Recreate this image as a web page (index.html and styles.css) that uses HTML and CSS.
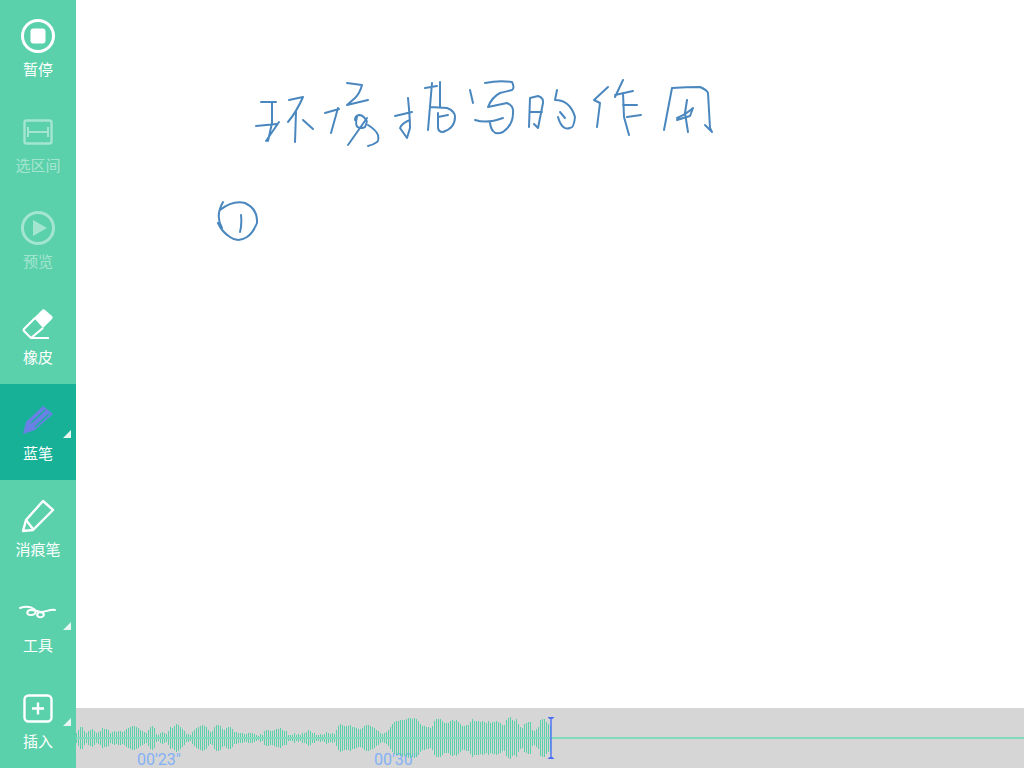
FILE: index.html
```html
<!DOCTYPE html>
<html lang="zh-CN">

<head>
  <meta charset="UTF-8">
  <title>录制</title>
  <link rel="stylesheet" href="styles.css">
</head>

<body>
  <div class="sidebar">
    <div class="tool">
      <svg class="icon" viewBox="0 0 40 40"><circle cx="20" cy="20" r="15.5" fill="none" stroke="#fff" stroke-width="3"/><rect x="12.5" y="12.5" width="15" height="15" rx="3" fill="#fff"/></svg>
      <span>暂停</span>
    </div>
    <div class="tool off">
      <svg class="icon" viewBox="0 0 40 40"><rect x="6.500" y="8.500" width="27" height="23" rx="2" fill="none" stroke="#fff" stroke-width="2.400"/><path d="M10 15v10M30 15v10M10 20h20" fill="none" stroke="#fff" stroke-width="2"/></svg>
      <span>选区间</span>
    </div>
    <div class="tool off">
      <svg class="icon" viewBox="0 0 40 40"><circle cx="20" cy="20" r="15.500" fill="none" stroke="#fff" stroke-width="3"/><path d="M15 12l14 8-14 8z" fill="#fff"/></svg>
      <span>预览</span>
    </div>
    <div class="tool">
      <svg class="icon" viewBox="0 0 40 40"><path d="M17 14L6 25q-1 1 0 2l7 7h18M13 34l12-10" fill="none" stroke="#fff" stroke-width="2.200" stroke-linejoin="round"/><path d="M16 14l8-8q1.500-1.500 3 0l7 6q1.500 1.500 0 3l-9 9z" fill="#fff"/></svg>
      <span>橡皮</span>
    </div>
    <div class="tool active has-menu">
      <svg class="icon" viewBox="0 0 40 40"><path d="M5 34l3-12L25 6l10 8-18 16z" fill="#6b80e6"/><path d="M13 23L27 10M17 27L31 14" stroke="#16b197" stroke-width="1.400"/></svg>
      <span>蓝笔</span>
    </div>
    <div class="tool">
      <svg class="icon" viewBox="0 0 40 40"><path d="M5 35l3-11L25 5l10 9-20 20z" fill="none" stroke="#fff" stroke-width="2.400" stroke-linejoin="round"/><path d="M8 24l7 9" stroke="#fff" stroke-width="2.400"/></svg>
      <span>消痕笔</span>
    </div>
    <div class="tool has-menu">
      <svg class="icon" viewBox="0 0 40 40"><path d="M2 16c6-2 11-1 14 1 3 2 2 6-3 6-5 0-5-5 0-5 5 0 9 2 12 3 2 2 0 5-4 4-3-1-2-5 2-5 5 0 9-3 14-2" fill="none" stroke="#fff" stroke-width="2" stroke-linecap="round"/></svg>
      <span>工具</span>
    </div>
    <div class="tool has-menu">
      <svg class="icon" viewBox="0 0 40 40"><rect x="6.500" y="7.500" width="27" height="26" rx="4" fill="none" stroke="#fff" stroke-width="2.400"/><path d="M20 14.500v12M14 20.500h12" stroke="#fff" stroke-width="2.400"/></svg>
      <span>插入</span>
    </div>
  </div>

  <div class="workspace">
    <div class="canvas">
      <svg class="ink" viewBox="76 0 948 708">
        <g fill="none" stroke="#4a87bf" stroke-width="2" stroke-linecap="round" stroke-linejoin="round">
          <path d="M261 102h15M272 103v20l-4 18M256 126l21-2M279 122l-13 19"/>
          <path d="M289 100l14-3q-6 14-15 25M296 112l-1 30M303 120l10 9"/>
          <path d="M325 113l14-4M338 108l-7 25"/>
          <path d="M347 83l15 2q-2 8-7 13l-8 7 21-5M357 117q-3 10 3 11 4 0 5-1 3-6 1-7-3-5-7-5-4 1-4 5M367 118l-19 27M368 125q8 5 10 10 1 6-1 7-4 3-9 4"/>
          <path d="M395 116l17-4M408 98q2 20 2 30l-3 10-7-10q2-5 10-8"/>
          <path d="M425 88l12-2M432 83l-4 47M440 82v25M430 107l17 1q8 3 8 9 0 11-12 15-5 0-5-5v-14M438 117l10-2"/>
          <path d="M470 90l3 13M485 83q14-3 27-1 3 6 0 8-7 2-12 3-8 4-12 14l19-4q7 3 6 10 0 12-10 19-7 3-10-1-2-2-3-8M475 120q12 4 28-2"/>
          <path d="M530 98l-1 29M530 98l8-2q6 2 5 7l-5 25-4-4M530 112h12"/>
          <path d="M557 90l-2 10q15 0 20 17-1 11-5 11-8 3-12-11M560 112l5 6"/>
          <path d="M608 87l-14 13 6 3-3 24M623 80l-8 17M615 95l18-4M623 93l1 24 5 18M623 105h14M627 117l14-2"/>
          <path d="M672 88l-8 42M672 88q14-1 28-1 7 3 8 6l2 35 2 4-7-7M687 100l-2 13 3 19M677 118q8-3 16-10l-3 8-13 4"/>
          <path d="M223 202q-8 14-1 26M220 210q13-10 25-7 13 6 12 20-4 10-10 14-9 6-17 0-8-5-12-14M241 215q1 9-1 17"/>
        </g>
      </svg>
    </div>
    <div class="timeline">
      <span class="stamp stamp-a">00'23"</span>
      <span class="stamp stamp-b">00'30"</span>
      <svg class="wave" viewBox="0 0 948 60">
        <path id="bars" fill="none" stroke="#5ad1aa" stroke-width="1"/>
        <path d="M0 30H948" stroke="#82dcbc" stroke-width="2"/>
        <path d="M475 10v40" stroke="#4a6ef5" stroke-width="1.400"/>
        <path d="M471.500 9h7l-2 2h-3zM471.500 51h7l-2-2h-3z" fill="#4a6ef5"/>
      </svg>
    </div>
  </div>

  <script src="script.js"></script>
</body>

</html>
```

FILE: styles.css
```css
* {
  padding: 0;
  margin: 0;
  box-sizing: border-box;
}

html,
body {
  height: 100%;
  overflow: hidden;
}

body {
  display: flex;
  background: #fff;
  font-family: "Noto Sans CJK SC", "Noto Sans", sans-serif;
}

.sidebar {
  display: flex;
  flex-direction: column;
  width: 76px;
  background: #5ad1aa;
}

.tool {
  position: relative;
  display: flex;
  flex-direction: column;
  align-items: center;
  height: 96px;
  padding-top: 16px;
  color: #fff;
  font-size: 15px;
  line-height: 20px;
}

.tool span {
  margin-top: 3px;
}

.icon {
  display: block;
  width: 40px;
  height: 40px;
}

.off {
  opacity: 0.45;
}

.active {
  background: #16b197;
}

.has-menu::after {
  content: "";
  position: absolute;
  top: 46px;
  right: 5px;
  width: 8px;
  height: 8px;
  background: #e8f6f1;
  clip-path: polygon(100% 0, 100% 100%, 0 100%);
}

.workspace {
  display: flex;
  flex-direction: column;
  flex: 1;
}

.canvas {
  flex: 1;
}

.ink {
  display: block;
  width: 948px;
  height: 708px;
}

.timeline {
  position: relative;
  height: 60px;
  overflow: hidden;
  background: #d6d6d6;
}

.wave {
  position: relative;
  display: block;
  width: 948px;
  height: 60px;
}

.stamp {
  position: absolute;
  top: 44px;
  color: #82b1f5;
  font-family: Roboto, sans-serif;
  font-size: 16px;
  line-height: 16px;
}

.stamp-a {
  left: 61px;
}

.stamp-b {
  left: 298px;
}
```

FILE: script.js
```js
// half heights of the recorded level, one bar every 2px
const levels = [
  5, 8, 11, 11, 7, 5, 7, 8, 9, 7, 5, 6, 7, 10, 9, 9, 8, 5, 6, 7, 6, 7, 7, 6, 7,
  9, 10, 11, 12, 12, 11, 10, 8, 7, 6, 5, 8, 11, 12, 10, 4, 3, 5, 6, 5, 4, 7, 11, 10, 12,
  14, 13, 11, 9, 7, 4, 4, 3, 6, 8, 10, 11, 12, 13, 12, 11, 8, 6, 7, 11, 13, 13, 12, 9, 8,
  10, 11, 11, 9, 6, 6, 5, 5, 5, 4, 4, 5, 5, 5, 4, 3, 2, 4, 3, 7, 8, 8, 7, 7, 8,
  9, 9, 10, 8, 7, 7, 3, 3, 3, 5, 3, 4, 3, 5, 5, 6, 8, 7, 5, 5, 3, 3, 4, 3, 4,
  6, 5, 4, 5, 4, 8, 12, 14, 13, 12, 12, 12, 13, 11, 11, 10, 9, 9, 10, 12, 13, 13, 12, 11, 10,
  8, 7, 5, 4, 5, 6, 8, 11, 14, 16, 17, 17, 18, 18, 18, 19, 20, 20, 19, 20, 19, 17, 14, 12, 12,
  11, 11, 10, 12, 17, 19, 19, 19, 17, 15, 15, 15, 17, 18, 17, 18, 16, 14, 12, 12, 13, 13, 16, 19, 17,
  17, 17, 16, 17, 16, 15, 17, 15, 16, 16, 17, 16, 15, 13, 13, 18, 20, 21, 18, 17, 19, 14, 11, 10, 14,
  15, 16, 16, 8, 7, 9, 11, 18, 19, 19, 16, 14, 13
];

let d = "";
for (let i = 0; i < levels.length; i++) {
  const x = i * 2 + 0.5;
  d += "M" + x + " " + (30 - levels[i]) + "V" + (30 + levels[i]);
}
document.getElementById("bars").setAttribute("d", d);
```
